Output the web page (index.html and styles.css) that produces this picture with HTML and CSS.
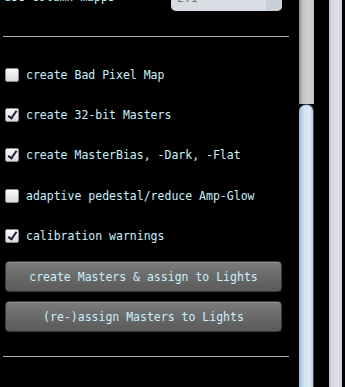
FILE: index.html
```html
<!DOCTYPE html>
<html lang="en">
<head>
    <meta charset="UTF-8">
    <title>Calibration</title>
    <link rel="stylesheet" href="styles.css">
</head>
<body>
    <div class="window">
        <div class="panel">
            <!-- 上の行 (一部だけ見えている) -->
            <div class="top-row">
                <span class="label">use column mapps</span>
                <div class="combo"><span class="combo-text">2:1</span><span class="combo-btn"></span></div>
            </div>
            <div class="sep first"></div>

            <label class="check-row"><span class="box"></span>create Bad Pixel Map</label>
            <label class="check-row"><span class="box checked"></span>create 32-bit Masters</label>
            <label class="check-row"><span class="box checked"></span>create MasterBias, -Dark, -Flat</label>
            <label class="check-row"><span class="box"></span>adaptive pedestal/reduce Amp-Glow</label>
            <label class="check-row"><span class="box checked"></span>calibration warnings</label>

            <div class="buttons">
                <button class="btn">create Masters &amp; assign to Lights</button>
                <button class="btn">(re-)assign Masters to Lights</button>
            </div>
            <div class="sep last"></div>
        </div>
        <div class="scrollbar">
            <div class="trough"></div>
            <div class="thumb"></div>
        </div>
        <div class="gap"></div>
        <div class="side-strip"></div>
    </div>
</body>
</html>
```

FILE: styles.css
```css
/* 基本 */
body {
    margin: 0;
    padding: 0;
    background-color: #000;
    width: 345px;
    height: 387px;
    overflow: hidden;
    font-family: "DejaVu Sans Mono", "Liberation Mono", monospace;
    font-size: 11.5px;
    color: #c9f0fd;
}

.window {
    display: flex;
    height: 387px;
}

/* 左のパネル */
.panel {
    width: 292px;
    padding-left: 3px;
    box-sizing: border-box;
}

.top-row {
    display: flex;
    align-items: flex-end;
    justify-content: space-between;
    height: 22px;
    margin-top: -11px;
    padding-right: 10px;
}

.label {
    padding-left: 1px;
    line-height: 16px;
    margin-bottom: 6px;
}

.combo {
    display: flex;
    width: 111px;
    height: 22px;
    background-color: #d8dce3;
    border-radius: 0 0 5px 5px;
    overflow: hidden;
}

.combo-text {
    flex: 1;
    color: #777;
    padding-left: 6px;
    line-height: 18px;
}

.combo-btn {
    width: 16px;
    background-color: #c9d0da;
}

.sep {
    height: 1px;
    background-color: #a9a9ad;
    margin-right: 3px;
}

.sep.first {
    margin-top: 25px;
    margin-bottom: 18px;
}

/* チェックボックス */
.check-row {
    display: flex;
    align-items: center;
    height: 40px;
    white-space: nowrap;
}

.check-row:nth-of-type(n+2) {
    height: 40.3px;
}

.box {
    width: 12px;
    height: 12px;
    margin-left: 2px;
    margin-right: 7px;
    border: 1px solid #8a8d92;
    border-radius: 2px;
    background: linear-gradient(#fbfbfb, #d9dbdf);
    position: relative;
}

.box.checked::after {
    content: "";
    position: absolute;
    left: 4px;
    top: 0px;
    width: 3px;
    height: 8px;
    border-right: 2px solid #1d2230;
    border-bottom: 2px solid #1d2230;
    transform: rotate(35deg);
}

/* ボタン */
.buttons {
    display: flex;
    flex-direction: column;
    gap: 9px;
    margin-top: 5px;
    padding-left: 2px;
    padding-right: 10px;
}

.btn {
    height: 31px;
    border: 1px solid #3a3a3a;
    border-radius: 4px;
    background: linear-gradient(#7d7d7d, #6a6a6a 50%, #5a5a5a);
    box-shadow: inset 0 1px 0 rgba(255, 255, 255, 0.15);
    color: #c9f0fd;
    font-family: inherit;
    font-size: 11.5px;
    padding: 0;
}

.sep.last {
    margin-top: 24px;
}

/* スクロールバー */
.scrollbar {
    width: 15px;
    margin-left: 7px;
    display: flex;
    flex-direction: column;
}

.trough {
    height: 104px;
    background: linear-gradient(90deg, #8b8c90, #c4c5c9 25%, #d0d1d5 70%, #c2c3c7);
}

.thumb {
    flex: 1;
    border-radius: 7px 7px 0 0;
    border-top: 1px solid #3c4a5a;
    border-right: 1px solid #3c4a5a;
    background: linear-gradient(90deg, #9fb8cf, #bcd2e6 20%, #d3e5f3 40%, #d8e8f5 80%, #b7cde0);
}

.gap {
    width: 15px;
}

.side-strip {
    width: 13px;
    background: linear-gradient(90deg, #bcc0c8, #d9dce3 25%, #dfe2e8 70%, #c9ccd3);
}
```
